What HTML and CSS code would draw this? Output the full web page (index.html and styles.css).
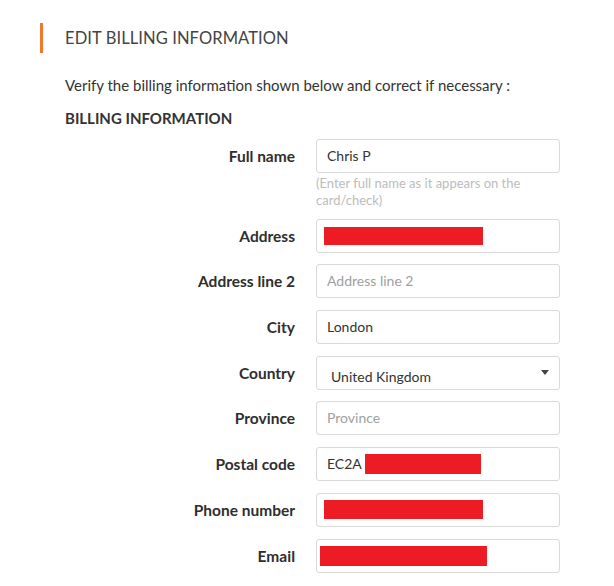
FILE: index.html
```html
<!DOCTYPE html>
<html>
<head>
<meta charset="utf-8">
<link rel="stylesheet" href="styles.css">
</head>
<body>
<div class="page">
  <h1 class="title">EDIT BILLING INFORMATION</h1>
  <div class="content">
    <p class="intro">Verify the billing information shown below and correct if necessary :</p>
    <h2 class="section">BILLING INFORMATION</h2>
    <div class="form">
      <div class="row">
        <label class="label">Full name</label>
        <div class="field">
          <div class="input">Chris P</div>
          <div class="hint">(Enter full name as it appears on the card/check)</div>
        </div>
      </div>
      <div class="row">
        <label class="label">Address</label>
        <div class="field"><div class="input"><span class="redact r-addr"></span></div></div>
      </div>
      <div class="row">
        <label class="label">Address line 2</label>
        <div class="field"><div class="input placeholder">Address line 2</div></div>
      </div>
      <div class="row">
        <label class="label">City</label>
        <div class="field"><div class="input">London</div></div>
      </div>
      <div class="row">
        <label class="label">Country</label>
        <div class="field"><div class="input select"><span class="sel-text">United Kingdom</span><span class="caret"></span></div></div>
      </div>
      <div class="row">
        <label class="label">Province</label>
        <div class="field"><div class="input placeholder">Province</div></div>
      </div>
      <div class="row">
        <label class="label">Postal code</label>
        <div class="field"><div class="input">EC2A <span class="redact r-post"></span></div></div>
      </div>
      <div class="row">
        <label class="label">Phone number</label>
        <div class="field"><div class="input"><span class="redact r-phone"></span></div></div>
      </div>
      <div class="row">
        <label class="label">Email</label>
        <div class="field"><div class="input email"><span class="redact r-email"></span></div></div>
      </div>
    </div>
  </div>
</div>
</body>
</html>
```
FILE: styles.css
```css
* { box-sizing: border-box; }
html, body { margin: 0; padding: 0; background: #fff; }
body { font-family: Lato, "Open Sans", sans-serif; color: #333; }
.page { padding: 23px 0 0 40px; }
.title {
  margin: 0;
  border-left: 3px solid #f0782a;
  padding-left: 22px;
  height: 30px;
  line-height: 30px;
  font-size: 16.5px;
  font-weight: 400;
  color: #444;
  letter-spacing: 0.1px;
}
.content { padding-left: 25px; }
.intro { margin: 22px 0 0; font-size: 15px; line-height: 20px; color: #333; }
.section { margin: 13px 0 0; font-size: 15px; font-weight: 700; line-height: 20px; color: #333; }
.form { margin-top: 11px; display: flex; flex-direction: column; gap: 11.7px; }
.row { display: grid; grid-template-columns: 230px 244px; column-gap: 21px; align-items: start; }
.label { text-align: right; font-weight: 700; font-size: 15.5px; line-height: 34px; color: #2e2e2e; }
.input {
  height: 34px;
  border: 1px solid #d9d9d9;
  border-radius: 3px;
  padding: 0 10px;
  font-size: 14px;
  line-height: 32px;
  color: #333;
  display: flex;
  align-items: center;
  white-space: nowrap;
}
.placeholder { color: #a0a0a0; }
.hint { margin-top: 2px; margin-bottom: -2px; font-size: 13px; line-height: 17px; color: #bcbcbc; padding-right: 20px; }
.select { justify-content: space-between; padding-left: 14px; padding-right: 10px; }
.sel-text { padding-top: 8px; }
.caret { width: 0; height: 0; border-left: 4px solid transparent; border-right: 4px solid transparent; border-top: 5px solid #444; }
.redact { display: inline-block; background: #ed1c24; }
.r-addr { width: 159px; height: 18px; margin-left: -3px; }
.r-post { width: 116px; height: 20px; margin-left: 3px; }
.r-phone { width: 159px; height: 19px; margin-left: -3px; }
.email { padding-left: 3px; }
.r-email { width: 167px; height: 20px; }
```
